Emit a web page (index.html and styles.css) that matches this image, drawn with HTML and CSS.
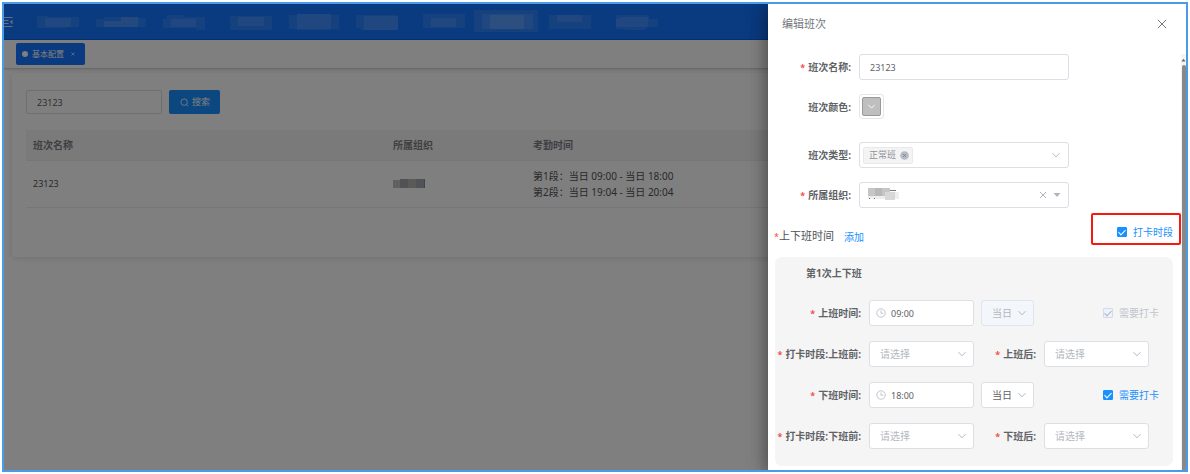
FILE: index.html
```html
<!DOCTYPE html>
<html lang="zh-CN">
<head>
<meta charset="utf-8">
<meta name="viewport" content="width=device-width, initial-scale=1">
<title>编辑班次</title>
<link rel="stylesheet" href="styles.css">
</head>
<body>
<svg class="defs" aria-hidden="true">
  <symbol id="chevron" viewBox="0 0 10 10"><path d="M1.5 3.2 5 6.8 8.5 3.2" fill="none" stroke="currentColor" stroke-width="1"/></symbol>
  <symbol id="clock" viewBox="0 0 10 10"><circle cx="5" cy="5" r="4.2" fill="none" stroke="currentColor" stroke-width=".8"/><path d="M5 2.4V5.3H7.3" fill="none" stroke="currentColor" stroke-width=".8"/></symbol>
</svg>
<div class="frame">
  <div class="app">
    <header class="topbar">
      <button class="fold" aria-label="收起菜单">
        <svg viewBox="0 0 10 10"><path d="M0 .5H8.5M0 3.5H4.5M0 6.5H4.5M0 9.5H8.5" stroke="currentColor" stroke-width="1" fill="none"/><path d="M8.5 2.8V7.2L5.8 5z" fill="currentColor"/></svg>
      </button>
      <nav class="menu">
        <svg viewBox="0 0 64 24"><path class="m1" d="M11 6H22V7H53V17H41V18H11z"/><path class="m1" d="M19 8H45V17H19z"/></svg>
        <svg viewBox="0 0 64 24"><path class="m1" d="M6 9H14V7H48V8H56V17H6z"/><path class="m2" d="M14 11H31V7H48V17H14z"/></svg>
        <svg viewBox="0 0 64 24"><path class="m1" d="M9 9H13V5H30V7H51V20H42V18H9z"/><path class="m1" d="M17 9H42V17H17z"/></svg>
        <svg viewBox="0 0 64 24"><path class="m1" d="M12 6H54V20H12z"/><path class="m1" d="M20 7H46V16H20z"/></svg>
        <svg viewBox="0 0 64 24"><path class="m1" d="M7 5H15V4H49V5H57V19H7z"/><path class="m1" d="M15 4H49V20H15z"/></svg>
        <svg viewBox="0 0 64 24"><path class="m1" d="M10 5H52V20H15V18H10z"/><path class="m1" d="M18 6H52V20H18z"/></svg>
        <svg viewBox="0 0 64 24"><path class="m1" d="M13 4H55V18H13z"/><path class="m1" d="M21 8H46V17H21z"/></svg>
        <svg viewBox="0 0 64 24"><path class="m1" d="M0 0H64V22H0z"/><path class="m1" d="M8 4H59V19H8z"/><path class="m2" d="M16 5H50V19H16z"/></svg>
        <svg viewBox="0 0 64 24"><path class="m1" d="M11 5H53V19H11z"/><path class="m1" d="M19 5H44V12H19z"/></svg>
        <svg viewBox="0 0 64 24"><path class="m1" d="M14 5H47V9H56V17H44V20H23V19H14z"/><path class="m1" d="M22 7H46V17H14V9z"/></svg>
      </nav>
    </header>
    <div class="tabs">
      <button class="tab"><i class="dot"></i>基本配置<svg class="tab-x" viewBox="0 0 4 4"><path d="M.5 .5 3.5 3.5M3.5 .5 .5 3.5" stroke="currentColor" stroke-width=".6"/></svg></button>
    </div>
    <main class="card">
      <form class="search">
        <input class="search-input" type="text" value="23123" aria-label="班次名称搜索">
        <button class="search-btn" type="button">
          <svg viewBox="0 0 10 10"><circle cx="4.6" cy="4.6" r="3.6" fill="none" stroke="currentColor" stroke-width=".9"/><path d="M7.2 7.2 9 9.2" stroke="currentColor" stroke-width=".9"/></svg>搜索
        </button>
      </form>
      <table class="list">
        <thead><tr><th class="c-name">班次名称</th><th class="c-org">所属组织</th><th>考勤时间</th></tr></thead>
        <tbody><tr>
          <td class="num">23123</td>
          <td><svg class="org-blur" viewBox="0 0 32 10"><path fill="#c4c2c0" d="M0 1H7V9H0z"/><path fill="#a4a5ab" d="M7 0H15V9H7z"/><path fill="#b6b4b2" d="M15 0H23V9H15z"/><path fill="#a2a7b0" d="M23 0H31V9H23z"/><path fill="#7d8ba0" d="M31 0H32V9H31z"/></svg></td>
          <td>第1段：当日 09:00 - 当日 18:00<br>第2段：当日 19:04 - 当日 20:04</td>
        </tr></tbody>
      </table>
    </main>
  </div>
  <div class="mask"></div>
  <aside class="drawer">
    <header class="drawer-head">
      <h2 class="drawer-title">编辑班次</h2>
      <button class="close" aria-label="关闭"><svg viewBox="0 0 10 10"><path d="M.8 .8 9.2 9.2M9.2 .8 .8 9.2" stroke="currentColor" stroke-width="1"/></svg></button>
    </header>
    <div class="drawer-body">
      <form class="form">
        <div class="basic">
          <label class="label req" for="name">班次名称:</label>
          <input class="box" id="name" type="text" value="23123">

          <label class="label" for="color">班次颜色:</label>
          <button class="picker" id="color" type="button"><span class="swatch"><svg viewBox="0 0 10 10"><use href="#chevron"/></svg></span></button>

          <label class="label type-row" for="type">班次类型:</label>
          <div class="box type-row multi" id="type" role="combobox" tabindex="0">
            <span class="tag">正常班<svg viewBox="0 0 10 10"><circle cx="5" cy="5" r="4.8" fill="#b8bcc6"/><path d="M3.2 3.2 6.8 6.8M6.8 3.2 3.2 6.8" stroke="#777c88" stroke-width=".9"/></svg></span>
            <svg class="ico" viewBox="0 0 10 10"><use href="#chevron"/></svg>
          </div>

          <label class="label req" for="org">所属组织:</label>
          <div class="box multi" id="org" role="combobox" tabindex="0">
            <svg class="org-value" viewBox="0 0 32 14"><path fill="#c6c6c6" d="M1 1H23V9H1z"/><path fill="#b8b8b8" d="M8 1H15V9H8z"/><path fill="#d8d8d8" d="M18 5H28V13H18z"/><path fill="#eee" d="M28 5H32V12H28zM1 9H18V12H1z"/><path fill="#777" d="M23 3H29V4H23zM2 11H3V12H2zM7 11H8V12H7z"/></svg>
            <svg class="ico-x" viewBox="0 0 8 8"><path d="M1 1 7 7M7 1 1 7" stroke="currentColor" stroke-width=".9"/></svg>
            <svg class="ico-caret" viewBox="0 0 8 8"><path d="M.5 2H7.5L4 6z" fill="currentColor"/></svg>
          </div>
        </div>

        <div class="times-head">
          <span class="times-title">上下班时间</span>
          <a class="add" href="#">添加</a>
          <label class="check hot"><input type="checkbox" checked>打卡时段</label>
        </div>

        <section class="panel">
          <h3 class="panel-title">第1次上下班</h3>
          <div class="line">
            <label class="label req" for="on">上班时间:</label>
            <div class="field time"><svg class="clock" viewBox="0 0 10 10"><use href="#clock"/></svg><input class="box" id="on" type="text" value="09:00"></div>
            <div class="field day off"><select class="box" disabled aria-label="上班日"><option>当日</option></select><svg class="ico" viewBox="0 0 10 10"><use href="#chevron"/></svg></div>
            <label class="check off"><input type="checkbox" checked disabled>需要打卡</label>
          </div>
          <div class="line">
            <label class="label req" for="on-before">打卡时段:上班前:</label>
            <div class="field"><select class="box hint" id="on-before"><option>请选择</option></select><svg class="ico" viewBox="0 0 10 10"><use href="#chevron"/></svg></div>
            <label class="label req second" for="on-after">上班后:</label>
            <div class="field"><select class="box hint" id="on-after"><option>请选择</option></select><svg class="ico" viewBox="0 0 10 10"><use href="#chevron"/></svg></div>
          </div>
          <div class="line">
            <label class="label req" for="leave">下班时间:</label>
            <div class="field time"><svg class="clock" viewBox="0 0 10 10"><use href="#clock"/></svg><input class="box" id="leave" type="text" value="18:00"></div>
            <div class="field day"><select class="box" aria-label="下班日"><option>当日</option></select><svg class="ico" viewBox="0 0 10 10"><use href="#chevron"/></svg></div>
            <label class="check"><input type="checkbox" checked>需要打卡</label>
          </div>
          <div class="line">
            <label class="label req" for="leave-before">打卡时段:下班前:</label>
            <div class="field"><select class="box hint" id="leave-before"><option>请选择</option></select><svg class="ico" viewBox="0 0 10 10"><use href="#chevron"/></svg></div>
            <label class="label req second" for="leave-after">下班后:</label>
            <div class="field"><select class="box hint" id="leave-after"><option>请选择</option></select><svg class="ico" viewBox="0 0 10 10"><use href="#chevron"/></svg></div>
          </div>
        </section>
      </form>
      <div class="scroll"><svg viewBox="0 0 6 10"><path d="M3 4 5.4 7.5H.6z" fill="#666"/></svg><div class="thumb"></div></div>
    </div>
  </aside>
</div>
</body>
</html>
```
FILE: styles.css
```css
* { box-sizing: border-box; }
body {
  margin: 0;
  padding: 2px;
  height: 100vh;
  background: #fff;
  font: 10px/16px "Noto Sans", "Noto Sans CJK SC", sans-serif;
  color: #606266;
}
button, input, select { font: inherit; color: inherit; margin: 0; }
button { border: 0; padding: 0; background: none; cursor: pointer; }
svg { display: block; flex: none; }
.defs { position: absolute; width: 0; height: 0; }

.frame {
  position: relative;
  height: 100%;
  border: 2px solid #4a9bea;
  overflow: hidden;
}

/* page behind the drawer */
.app { height: 100%; background: #fff; }
.topbar {
  display: flex;
  align-items: center;
  height: 36px;
  background: #1474ff;
  border-bottom: 1px solid #1060d8;
}
.fold { color: #d4e2f8; width: 22px; }
.fold svg { width: 10px; height: 10px; }
.menu { display: flex; }
.menu svg { width: 64px; height: 24px; }
.m1 { fill: #fff; opacity: .1; }
.m2 { fill: #fff; opacity: .14; }
.tabs {
  display: flex;
  align-items: center;
  height: 29px;
  padding: 0 12px;
  border-bottom: 1px solid #d4d6da;
  box-shadow: 0 1px 2px rgba(0, 0, 0, .12);
}
.tab {
  display: flex;
  align-items: center;
  height: 22px;
  padding: 0 10px 0 6px;
  border-radius: 2px;
  background: #1474ff;
  color: #fff;
  font-size: 8px;
}
.dot { width: 6px; height: 6px; margin-right: 4px; border-radius: 50%; background: #fff; }
.tab-x { width: 4px; height: 4px; margin-left: 7px; }
.card {
  margin: 4px 8px;
  padding: 17px 14px 49px;
  border-radius: 3px;
  box-shadow: 0 1px 6px rgba(0, 0, 0, .12);
}
.search { display: flex; gap: 7px; }
.search-input {
  width: 136px;
  height: 24px;
  padding: 0 10px;
  border: 1px solid #dcdfe6;
  border-radius: 2px;
  background: #fff;
  font-size: 9px;
}
.search-btn {
  display: flex;
  align-items: center;
  gap: 3px;
  height: 24px;
  padding: 0 10px 0 11px;
  border-radius: 2px;
  background: #1890ff;
  color: #fff;
  font-size: 9px;
}
.search-btn svg { width: 9px; height: 9px; }
.list {
  width: 100%;
  margin-top: 16px;
  border-collapse: collapse;
  table-layout: fixed;
}
.list th, .list td { padding: 7px; text-align: left; border-bottom: 1px solid #ebeef5; }
.list th { background: #f4f4f5; color: #7c7f85; font-weight: 700; }
.list td { color: #505256; }
.list .num { font-size: 9px; }
.c-name { width: 360px; }
.c-org { width: 140px; }
.org-blur { width: 32px; height: 10px; }

.mask { position: absolute; inset: 0; background: rgba(0, 0, 0, .5); }

/* drawer */
.drawer {
  position: absolute;
  inset: 0 0 0 auto;
  width: 418px;
  display: flex;
  flex-direction: column;
  background: #fff;
  box-shadow: 0 6px 16px rgba(0, 0, 0, .3), 0 0 20px rgba(0, 0, 0, .25);
}
.drawer-head {
  display: flex;
  align-items: center;
  justify-content: space-between;
  padding: 12px 19px 12px 14px;
}
.drawer-title { margin: 0; font-size: 11px; font-weight: 400; color: #72767b; }
.close { color: #72767b; }
.close svg { width: 10px; height: 10px; }
.drawer-body { flex: 1; display: flex; min-height: 0; padding-top: 10px; }
.form { flex: 1; overflow: hidden; }

.basic {
  display: grid;
  grid-template-columns: 83px 210px;
  column-gap: 8px;
  row-gap: 14px;
  align-items: center;
}
.label { text-align: right; font-weight: 700; color: #606266; white-space: nowrap; }
.req::before { content: "*"; margin-right: 3px; color: #f24c4c; font-size: 9px; }
.type-row { margin-top: 9px; }
.box {
  width: 100%;
  height: 26px;
  padding: 0 10px;
  border: 1px solid #dcdfe6;
  border-radius: 3px;
  background: #fff;
  color: #606266;
  appearance: none;
}
input.box { font-size: 9px; }
.picker {
  display: grid;
  place-items: center;
  width: 25px;
  height: 25px;
  border: 1px solid #e6e6e6;
  border-radius: 3px;
}
.swatch {
  display: grid;
  place-items: center;
  width: 19px;
  height: 19px;
  border: 1px solid #999;
  border-radius: 2px;
  background: #bfbfbf;
  color: #fff;
}
.swatch svg { width: 9px; height: 9px; }
.multi { display: flex; align-items: center; padding: 0 7px 0 3px; }
.tag {
  display: flex;
  align-items: center;
  gap: 4px;
  height: 17px;
  padding: 0 3px 0 5px;
  margin-right: auto;
  border: 1px solid #e9e9eb;
  border-radius: 2px;
  background: #f4f4f5;
  color: #909399;
  font-size: 9px;
}
.tag svg { width: 9px; height: 9px; }
.ico { width: 10px; height: 10px; color: #b4b8c0; }
.org-value { width: 32px; height: 14px; margin: 0 auto 3px 4px; }
.ico-x { width: 8px; height: 8px; margin-right: 6px; color: #a8abb2; }
.ico-caret { width: 8px; height: 8px; color: #b4b4b4; }

.times-head { display: flex; align-items: center; margin: 5px 0 12px; padding-left: 6px; }
.times-title { font-size: 11px; color: #505256; margin: 15px 10px 0 0; }
.times-title::before { content: "*"; color: #f24c4c; font-size: 9px; }
.add { color: #1890ff; text-decoration: none; margin-top: 15px; }
.check { display: flex; align-items: center; gap: 6px; margin-left: auto; color: #1890ff; }
.hot { height: 32px; padding: 5px 6px 0 24px; border: 2px solid #f5190f; border-radius: 2px; }
.check input {
  appearance: none;
  width: 10px;
  height: 10px;
  border: 1px solid #1890ff;
  border-radius: 1px;
  background: #1890ff;
  display: grid;
  place-items: center;
}
.check input::after {
  content: "";
  width: 3px;
  height: 6px;
  margin-bottom: 2px;
  border: solid #fff;
  border-width: 0 1px 1px 0;
  transform: rotate(45deg);
}
.check.off { color: #c0c4cc; }
.check.off input { background: #edf2fc; border-color: #d3dbe8; }
.check.off input::after { border-color: #b0b6c2; }

.panel {
  display: grid;
  gap: 15px;
  margin: 0 8px 0 7px;
  padding: 8px 14px 17px 0;
  border-radius: 7px;
  background: #f5f5f5;
}
.panel-title { margin: 0 0 4px 31px; font-size: 10px; font-weight: 700; color: #606266; }
.line { display: flex; align-items: center; }
.line .label { width: 86px; }
.line .second { width: 62px; }
.field { position: relative; width: 105px; margin-left: 8px; color: #606266; }
.field .ico { position: absolute; right: 7px; top: 8px; pointer-events: none; }
.time .box { padding-left: 21px; }
.clock { position: absolute; left: 7px; top: 8px; width: 10px; height: 10px; color: #b4b8c0; }
.day { width: 53px; margin-left: 7px; }
.off .box { background: #f3f6fb; border-color: #e0e4ec; color: #b4b8c0; opacity: 1; }
.line .hint { color: #b4b8c0; }

.scroll { width: 5px; display: flex; flex-direction: column; align-items: center; background: #f4f4f4; }
.scroll svg { width: 5px; height: 11px; }
.thumb { flex: 1; width: 4px; border-radius: 2px 2px 0 0; background: #888; }
```
